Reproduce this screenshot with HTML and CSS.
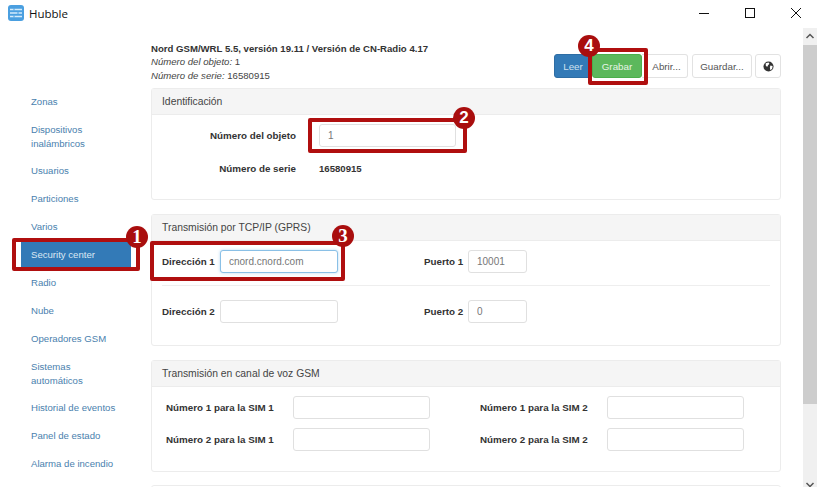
FILE: index.html
```html
<!DOCTYPE html>
<html lang="es">
<head>
<meta charset="utf-8">
<title>Hubble</title>
<link rel="stylesheet" href="styles.css">
</head>
<body>
<div class="window">
  <header class="titlebar">
    <div class="app">
      <svg class="app-icon" width="16" height="16" viewBox="0 0 16 16"><rect width="16" height="16" rx="3" fill="#4a9fe0"/><path d="M2 4.500h12M2 8h12M2 11.500h12" stroke="#d5ecfb" stroke-width="1.600"/><path d="M6 3.500v2M10 7v2M6 10.500v2" stroke="#4a9fe0" stroke-width="1"/></svg>
      <span>Hubble</span>
    </div>
    <div class="winbtns">
      <svg width="12" height="12" viewBox="0 0 12 12"><path d="M1 6.500h10" stroke="#111" stroke-width="1"/></svg>
      <svg width="12" height="12" viewBox="0 0 12 12"><rect x="1.500" y="1.500" width="9" height="9" fill="none" stroke="#111"/></svg>
      <svg width="12" height="12" viewBox="0 0 12 12"><path d="M1 1l10 10M11 1L1 11" stroke="#111" stroke-width="1"/></svg>
    </div>
  </header>
  <div class="body">
    <nav class="side">
      <a class="nav">Zonas</a>
      <a class="nav two">Dispositivos inalámbricos</a>
      <a class="nav">Usuarios</a>
      <a class="nav">Particiones</a>
      <a class="nav">Varios</a>
      <a class="nav active">Security center</a>
      <a class="nav">Radio</a>
      <a class="nav">Nube</a>
      <a class="nav">Operadores GSM</a>
      <a class="nav two">Sistemas automáticos</a>
      <a class="nav">Historial de eventos</a>
      <a class="nav">Panel de estado</a>
      <a class="nav">Alarma de incendio</a>
    </nav>
    <main class="main">
      <div class="top">
        <div class="info">
          <div class="bold">Nord GSM/WRL 5.5, versión 19.11 / Versión de CN-Radio 4.17</div>
          <div><i>Número del objeto:</i> 1</div>
          <div><i>Número de serie:</i> 16580915</div>
        </div>
        <div class="btns">
          <div class="group">
            <button class="btn blue">Leer</button>
            <button class="btn green">Grabar</button>
            <button class="btn plain">Abrir...</button>
          </div>
          <button class="btn save">Guardar...</button>
          <button class="btn globe"><svg width="11" height="11" viewBox="0 0 12 12"><circle cx="6" cy="6" r="5.500" fill="#333"/><path d="M3 2.500l3-1 1 1.500-1.500 1.500-1 2L3 5zM8 5l2.500.5L10 8.500 8 10 7.500 7z" fill="#fff"/></svg></button>
        </div>
      </div>
      <section class="panel p-id">
        <h2 class="head">Identificación</h2>
        <div class="id-body">
          <div class="id-row">
            <label class="lbl id-lbl">Número del objeto</label>
            <input class="input w137" value="1">
          </div>
          <div class="id-row serial">
            <label class="lbl id-lbl">Número de serie</label>
            <span class="bold val">16580915</span>
          </div>
        </div>
      </section>
      <section class="panel p-tcp">
        <h2 class="head">Transmisión por TCP/IP (GPRS)</h2>
        <div class="tcp-row first">
          <div class="pair"><label class="lbl addr">Dirección 1</label><input class="input w118 focus" value="cnord.cnord.com"></div>
          <div class="pair"><label class="lbl port">Puerto 1</label><input class="input w58" value="10001"></div>
        </div>
        <div class="tcp-row">
          <div class="pair"><label class="lbl addr">Dirección 2</label><input class="input w118"></div>
          <div class="pair"><label class="lbl port">Puerto 2</label><input class="input w58" value="0"></div>
        </div>
      </section>
      <section class="panel p-gsm">
        <h2 class="head">Transmisión en canal de voz GSM</h2>
        <div class="gsm-grid">
          <div class="pair"><label class="lbl sim">Número 1 para la SIM 1</label><input class="input w137"></div>
          <div class="pair"><label class="lbl sim">Número 1 para la SIM 2</label><input class="input w137"></div>
          <div class="pair"><label class="lbl sim">Número 2 para la SIM 1</label><input class="input w137"></div>
          <div class="pair"><label class="lbl sim">Número 2 para la SIM 2</label><input class="input w137"></div>
        </div>
      </section>
      <section class="panel p-next"></section>
    </main>
    <div class="scrollbar">
      <svg width="14" height="17" viewBox="0 0 14 17"><path d="M3.500 10L7 6.500 10.500 10" fill="none" stroke="#555" stroke-width="1.500"/></svg>
      <div class="thumb"></div>
      <svg class="down" width="14" height="17" viewBox="0 0 14 17"><path d="M3.500 7L7 10.500 10.500 7" fill="none" stroke="#555" stroke-width="1.500"/></svg>
    </div>
  </div>
  <div class="mark m1"></div><span class="badge serif b1">1</span>
  <div class="mark m2"></div><span class="badge b2">2</span>
  <div class="mark m3"></div><span class="badge serif b3">3</span>
  <div class="mark m4"></div><span class="badge b4">4</span>
</div>
</body>
</html>
```
FILE: styles.css
```css
* { box-sizing: border-box; }
html, body { margin: 0; height: 100%; overflow: hidden; background: #fff; }
body { font-family: "Liberation Sans", Arial, sans-serif; font-size: 9.600px; color: #333; }
.window { position: relative; width: 817px; height: 487px; overflow: hidden; }
.titlebar { height: 28px; display: flex; justify-content: space-between; align-items: flex-start; }
.app { display: flex; align-items: center; gap: 5px; padding: 5px 0 0 8px; font-family: "Open Sans", "Liberation Sans", sans-serif; font-size: 11.500px; line-height: 15px; color: #111; }
.winbtns { display: flex; gap: 34px; padding: 7px 15px 0 0; }
.winbtns svg { display: block; }
.body { display: flex; height: 459px; }
.side { width: 151px; flex: none; padding: 61px 20px 0 21px; display: flex; flex-direction: column; }
.nav { display: block; height: 28px; line-height: 12px; padding: 7px 10px 0 10px; color: #4a7fae; }
.nav.two { height: 41px; line-height: 13.500px; padding: 6px 40px 0 10px; }
.nav.active { background: #337ab7; color: #dbe8f3; }
.main { width: 630px; flex: none; }
.top { height: 60px; display: flex; justify-content: space-between; padding-top: 14px; }
.info { line-height: 13.400px; color: #444; }
.bold { font-weight: 700; color: #333; }
.btns { display: flex; gap: 4px; padding-top: 26px; margin-top: -14px; align-items: flex-start; }
.group { display: flex; }
.btn { height: 24px; padding: 0 7px; border: 1px solid #e2e2e2; border-radius: 3px; background: #fff; color: #555; font: 9.800px "Liberation Sans", Arial, sans-serif; }
.blue { width: 38px; background: #337ab7; border-color: #2e6da4; color: #cfe0ee; border-radius: 3px 0 0 3px; }
.green { width: 50px; background: #5cb85c; border-color: #4cae4c; color: #e6f4e6; border-radius: 3px; }
.plain { width: 46px; border-radius: 0 3px 3px 0; border-left: 0; padding: 0 0 0 4px; }
.save { width: 60px; padding: 0; }
.globe { width: 26px; margin-left: -1px; padding: 0; display: flex; align-items: center; justify-content: center; }
.panel { border: 1px solid #ececec; border-radius: 3px; margin-bottom: 14px; }
.head { margin: 0; height: 26px; line-height: 25px; padding-left: 10px; font-size: 10.350px; font-weight: 400; color: #444; background: #f5f5f5; border-bottom: 1px solid #ececec; }
.p-id { height: 112px; }
.p-tcp { height: 132px; }
.p-gsm { height: 112px; margin-bottom: 13px; }
.p-next { height: 40px; }
.lbl { font-size: 9.800px; font-weight: 700; color: #333; }
.input { height: 23px; border: 1px solid #e0e0e0; border-radius: 3px; padding: 0 8px; font: 10px "Liberation Sans", Arial, sans-serif; color: #777; background: #fff; outline: 0; }
.focus { border-color: #8ac0e6; box-shadow: 0 0 3px rgba(102,175,233,.5); }
.w137 { width: 137px; }
.w118 { width: 118px; }
.w58 { width: 59px; }
.id-body { padding-top: 9px; }
.id-row { display: flex; align-items: center; gap: 23px; }
.id-lbl { width: 144px; text-align: right; }
.serial { margin-top: 10px; height: 23px; }
.tcp-row { display: flex; align-items: flex-start; padding: 9px 0 0 10px; height: 45px; }
.tcp-row.first { position: relative; }
.tcp-row.first::after { content: ""; position: absolute; left: 10px; right: 10px; bottom: 0; border-bottom: 1px solid #eee; }
.tcp-row + .tcp-row { padding-top: 14px; }
.pair { display: flex; align-items: center; }
.addr { width: 58px; }
.tcp-row .pair:first-child { width: 262px; }
.port { width: 44px; }
.gsm-grid { display: grid; grid-template-columns: 314px 1fr; row-gap: 9px; padding: 9px 0 0 14px; }
.sim { width: 127px; }
.scrollbar { width: 14px; margin-left: 22px; flex: none; background: #f0f0f0; display: flex; flex-direction: column; height: 465px; }
.scrollbar svg { flex: none; }
.thumb { height: 359px; background: #cdcdcd; }
.down { margin-top: auto; }
.mark { position: absolute; border: 4px solid #b00f0f; border-radius: 2px; }
.m1 { left: 12px; top: 238px; width: 128px; height: 33px; }
.m2 { left: 308px; top: 118px; width: 159px; height: 35px; }
.m3 { left: 150px; top: 241px; width: 195px; height: 40px; }
.m4 { left: 588px; top: 48px; width: 60px; height: 37px; }
.badge { position: absolute; width: 22px; height: 22px; border-radius: 50%; background: #a90e0e; color: #fff; text-align: center; font: 700 17px/22px "Liberation Sans", sans-serif; }
.serif { font: 700 19px/22px "Liberation Serif", serif; }
.b1 { left: 126px; top: 226px; }
.b2 { left: 453px; top: 107px; }
.b3 { left: 332px; top: 225px; }
.b4 { left: 578px; top: 35px; }
```
